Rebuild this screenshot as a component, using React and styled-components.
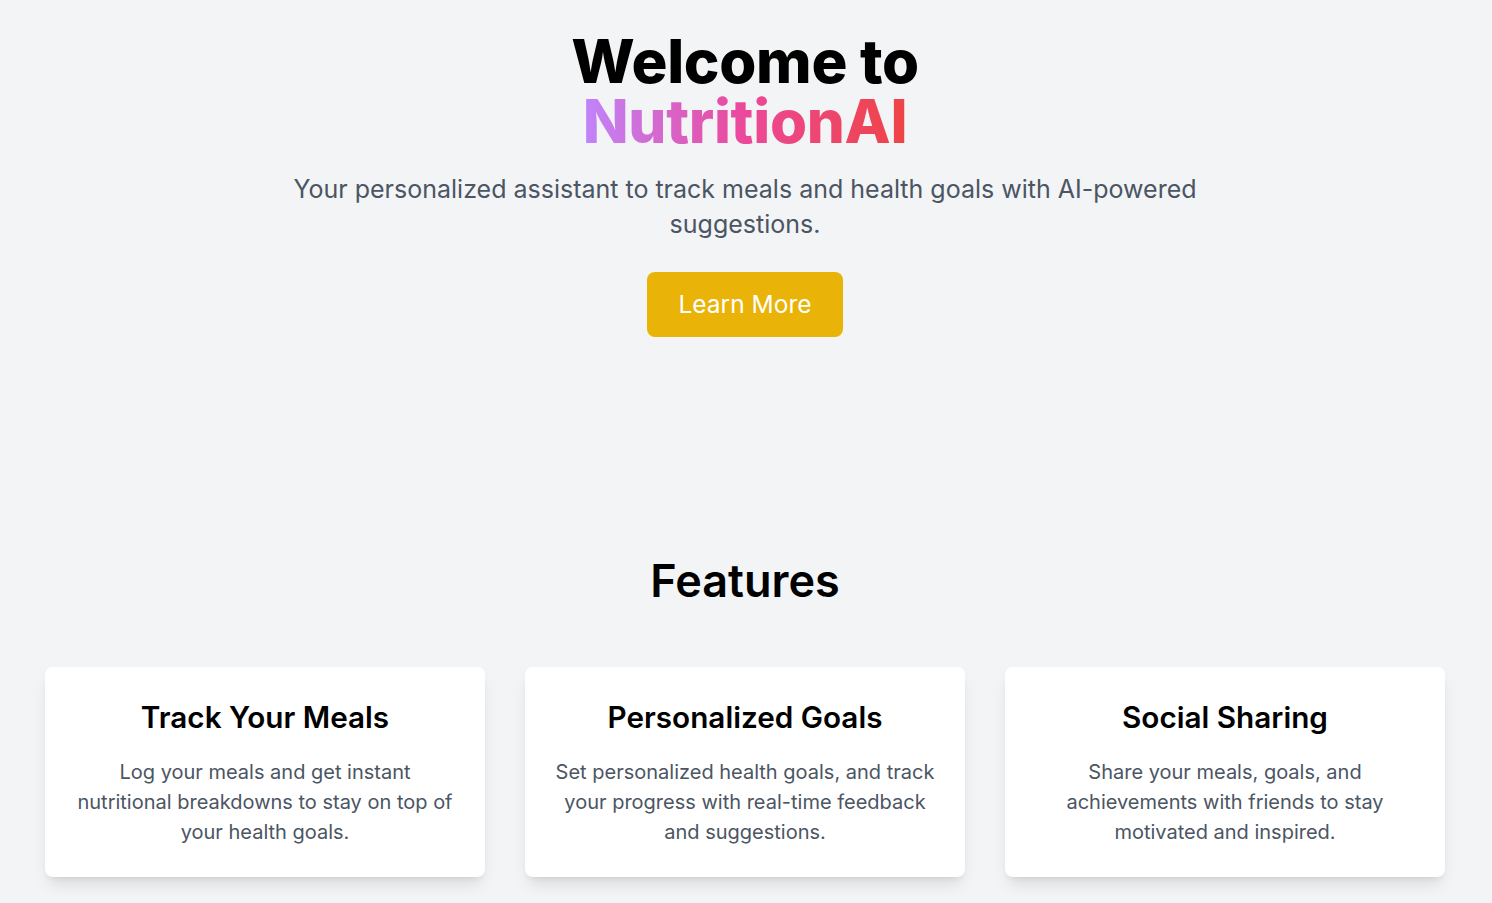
import React from "react";
import styled, { createGlobalStyle } from "styled-components";

const GlobalStyle = createGlobalStyle`
  * { box-sizing: border-box; }
  body {
    margin: 0;
    background: #f3f4f6;
    font-family: Inter, "Noto Sans", sans-serif;
    color: #000;
  }
`;

const Page = styled.main`
  min-height: 100vh;
  display: flex;
  flex-direction: column;
  align-items: center;
  padding: 31px 47px 40px 45px;
`;

const Hero = styled.section`
  display: flex;
  flex-direction: column;
  align-items: center;
  text-align: center;
`;

const Title = styled.h1`
  margin: 0;
  font-size: 60px;
  line-height: 60px;
  font-weight: 800;
  letter-spacing: -0.3px;
`;

const Gradient = styled.span`
  display: inline-block;
  background: linear-gradient(to right, #c084fc, #ec4899, #ef4444);
  -webkit-background-clip: text;
  background-clip: text;
  color: transparent;
`;

const Subtitle = styled.p`
  margin: 21px 0 0;
  max-width: 920px;
  font-size: 25px;
  line-height: 35px;
  color: #4b5563;
`;

const Button = styled.button`
  margin-top: 30px;
  padding: 16px 31px;
  border: none;
  border-radius: 8px;
  background: #eab308;
  color: #fff;
  font-family: inherit;
  font-size: 24.5px;
  line-height: 33px;
  cursor: pointer;
`;

const Features = styled.section`
  margin-top: 221px;
  width: 100%;
  display: flex;
  flex-direction: column;
  align-items: center;
`;

const SectionTitle = styled.h2`
  margin: 0;
  font-size: 45px;
  line-height: 45px;
  font-weight: 600;
`;

const Grid = styled.div`
  margin-top: 64px;
  width: 100%;
  display: grid;
  grid-template-columns: repeat(3, 1fr);
  gap: 40px;
`;

const Card = styled.div`
  background: #fff;
  border-radius: 8px;
  padding: 32px 28px 28px;
  height: 210px;
  text-align: center;
  box-shadow: 0 10px 15px -3px rgba(0, 0, 0, 0.1), 0 4px 6px -4px rgba(0, 0, 0, 0.1);
`;

const CardTitle = styled.h3`
  margin: 0;
  font-size: 29.7px;
  line-height: 36px;
  font-weight: 600;
`;

const CardText = styled.p`
  margin: 22px 0 0;
  font-size: 20px;
  line-height: 30px;
  color: #4b5563;
`;

const features = [
  {
    title: "Track Your Meals",
    text: "Log your meals and get instant nutritional breakdowns to stay on top of your health goals.",
  },
  {
    title: "Personalized Goals",
    text: "Set personalized health goals, and track your progress with real-time feedback and suggestions.",
  },
  {
    title: "Social Sharing",
    text: "Share your meals, goals, and achievements with friends to stay motivated and inspired.",
  },
];

export default function App() {
  return (
    <>
      <GlobalStyle />
      <Page>
        <Hero>
          <Title>
            Welcome to
            <br />
            <Gradient>NutritionAI</Gradient>
          </Title>
          <Subtitle>
            Your personalized assistant to track meals and health goals with AI-powered suggestions.
          </Subtitle>
          <Button>Learn More</Button>
        </Hero>
        <Features>
          <SectionTitle>Features</SectionTitle>
          <Grid>
            {features.map((f) => (
              <Card key={f.title}>
                <CardTitle>{f.title}</CardTitle>
                <CardText>{f.text}</CardText>
              </Card>
            ))}
          </Grid>
        </Features>
      </Page>
    </>
  );
}
